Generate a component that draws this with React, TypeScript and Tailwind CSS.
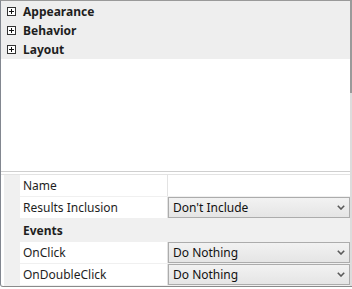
const categories = ["Appearance", "Behavior", "Layout"];

function PlusBox() {
  return (
    <svg width="9" height="9" viewBox="0 0 9 9" className="shrink-0">
      <rect x="0.5" y="0.5" width="8" height="8" fill="#fff" stroke="#333" />
      <path d="M2 4.5h5M4.5 2v5" stroke="#111" strokeWidth="1" />
    </svg>
  );
}

function Chevron() {
  return (
    <svg width="8" height="5" viewBox="0 0 8 5" className="shrink-0">
      <path d="M0.8 0.8L4 4l3.2-3.2" fill="none" stroke="#5a5a5a" strokeWidth="1.6" />
    </svg>
  );
}

function Combo({ value }: { value: string }) {
  return (
    <div className="flex h-full items-center justify-between border border-[#acacac] bg-gradient-to-b from-[#f2f2f2] to-[#e5e5e5] pl-[4px] pr-[4px]">
      <span className="text-[#111]">{value}</span>
      <Chevron />
    </div>
  );
}

function Row({ label, value, combo }: { label: string; value?: string; combo?: boolean }) {
  return (
    <div className="flex h-[22px] border-b border-[#f0f0f0]">
      <div className="w-[16px] shrink-0 bg-[#f0f0f0]" />
      <div className="flex w-[148px] shrink-0 items-center border-r border-[#e3e3e3] pl-[3px] text-[#1e1e1e]">
        {label}
      </div>
      <div className="flex-1">{combo ? <Combo value={value ?? ""} /> : null}</div>
    </div>
  );
}

export default function App() {
  return (
    <div
      className="relative flex h-[289px] w-[352px] flex-col overflow-hidden bg-white text-[12px]"
      style={{ fontFamily: '"Noto Sans", "Liberation Sans", sans-serif' }}
    >
      <div className="flex h-[287px] rounded-bl-[3px] border-t border-b border-l border-t-[#999] border-b-[#8a8a8a] border-l-[#828790]">
        <div className="flex flex-1 flex-col">
          <div className="flex h-[58px] flex-col bg-[#eeeeee] pt-[1px]">
            {categories.map((c) => (
              <div key={c} className="flex h-[19px] items-center gap-[7px] pl-[6px]">
                <PlusBox />
                <span className="font-bold text-[#1e1e1e]">{c}</span>
              </div>
            ))}
          </div>
          <div className="flex-1 bg-white" />
          <div className="h-[4px] border-t border-b border-t-[#cfcfcf] border-b-[#e3e3e3] bg-white" />
          <div className="flex flex-col pl-[3px]">
            <Row label="Name" />
            <Row label="Results Inclusion" value="Don't Include" combo />
            <div className="flex h-[23px] items-center bg-[#f0f0f0] pl-[19px] font-bold text-[#1e1e1e]">
              Events
            </div>
            <Row label="OnClick" value="Do Nothing" combo />
            <Row label="OnDoubleClick" value="Do Nothing" combo />
          </div>
        </div>
        <div className="flex w-[2px] flex-col">
          <div className="h-[92px] bg-[#9a9a9a]" />
          <div className="flex-1 bg-[#dcdcdc]" />
        </div>
      </div>
    </div>
  );
}
